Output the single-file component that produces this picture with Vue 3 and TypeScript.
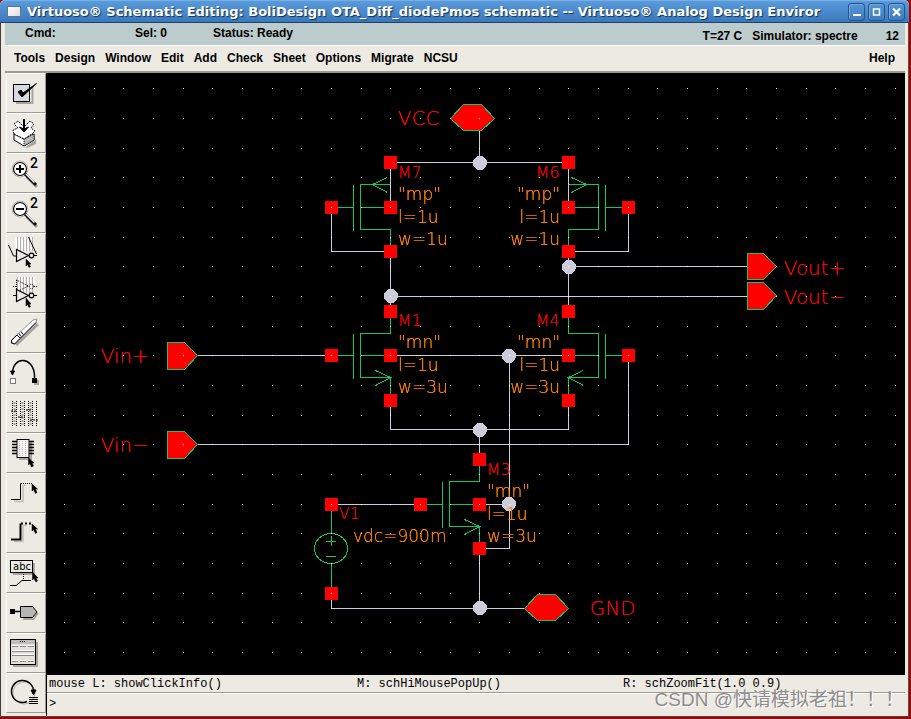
<script setup lang="ts">
type Point = [number, number]

interface Label {
  text: string
  x: number
  y: number
  kind: 'pin' | 'name' | 'param'
  end?: boolean
}

interface Device {
  name: string
  model: string
  width: string
  x: number
  y: number
  dir: 1 | -1
  pmos: boolean
  top: number
  drain: number
  source: number
  gate: number
  labelY: number
}

const menus: string[] = ['Tools', 'Design', 'Window', 'Edit', 'Add', 'Check', 'Sheet', 'Options', 'Migrate', 'NCSU']

const tools: string[] = [
  'Check and save', 'Save', 'Zoom in', 'Zoom out', 'Stretch', 'Copy', 'Delete', 'Undo',
  'Property', 'Component', 'Wire narrow', 'Wire wide', 'Wire name', 'Pin', 'Command options', 'Repeat',
]

const pitch = 89 / 3
const gridDots: Point[] = []
for (let row = -1; row < 19; row++) {
  for (let col = -9; col < 20; col++) {
    gridDots.push([Math.round(331 + col * pitch), Math.round(118 + row * pitch)])
  }
}

// x, y is the bulk terminal; dir points from the gate towards the channel terminals
const devices: Device[] = [
  { name: 'M7', model: '"mp"', width: 'w=1u', x: 390, y: 207, dir: 1, pmos: true, top: 23, drain: 45, source: 44, gate: 331, labelY: 178 },
  { name: 'M6', model: '"mp"', width: 'w=1u', x: 568, y: 207, dir: -1, pmos: true, top: 23, drain: 45, source: 44, gate: 628, labelY: 178 },
  { name: 'M1', model: '"mn"', width: 'w=3u', x: 390, y: 355, dir: 1, pmos: false, top: 22, drain: 44, source: 45, gate: 331, labelY: 326 },
  { name: 'M4', model: '"mn"', width: 'w=3u', x: 568, y: 355, dir: -1, pmos: false, top: 22, drain: 44, source: 45, gate: 628, labelY: 326 },
  { name: 'M3', model: '"mn"', width: 'w=3u', x: 479, y: 504, dir: 1, pmos: false, top: 23, drain: 45, source: 44, gate: 420, labelY: 475 },
]

function devicePath(d: Device): string {
  const X = (n: number): number => d.x + 0.5 - n * d.dir
  const Y = (n: number): number => d.y + 0.5 + n
  const body = `M${X(59)} ${Y(0)}H${X(37)}M${X(37)} ${Y(-d.top)}V${Y(23)}M${X(30)} ${Y(0)}H${X(0)}` +
    `M${X(0)} ${Y(-d.drain)}V${Y(-d.top)}H${X(30)}V${Y(22)}H${X(0)}V${Y(d.source)}`
  const arrow = d.pmos
    ? `M${X(3)} ${Y(-30)}L${X(18)} ${Y(-23)}L${X(3)} ${Y(-15)}`
    : `M${X(15)} ${Y(15)}L${X(0)} ${Y(22)}L${X(15)} ${Y(30)}`
  return body + arrow
}

const terminals: Point[] = devices
  .flatMap((d): Point[] => [[d.x, d.y - d.drain], [d.x, d.y], [d.x, d.y + d.source], [d.gate, d.y]])
  .concat([[331, 504], [331, 593]])

const labels: Label[] = [
  { text: 'VCC', x: 398, y: 125, kind: 'pin' },
  { text: 'Vin+', x: 101, y: 363, kind: 'pin' },
  { text: 'Vin−', x: 101, y: 452, kind: 'pin' },
  { text: 'Vout+', x: 784, y: 275, kind: 'pin' },
  { text: 'Vout−', x: 784, y: 304, kind: 'pin' },
  { text: 'GND', x: 590, y: 615, kind: 'pin' },
  { text: 'V1', x: 339, y: 519, kind: 'name' },
  { text: 'vdc=900m', x: 353, y: 542, kind: 'param' },
  ...devices.flatMap((d): Label[] => {
    const x = d.dir === 1 ? d.x + 8 : d.x - 8
    const end = d.dir === -1
    return [
      { text: d.name, x, y: d.labelY, kind: 'name', end },
      { text: d.model, x, y: d.labelY + 22, kind: 'param', end },
      { text: 'l=1u', x, y: d.labelY + 45, kind: 'param', end },
      { text: d.width, x, y: d.labelY + 67, kind: 'param', end },
    ]
  }),
]

const wires: string[] = [
  'M390.5 207V162.5H568.5V207', 'M479.5 131V162', 'M331.5 207V251.5H390.5V311', 'M628.5 207V251.5H568.5V311',
  'M568.5 266.5H747', 'M390.5 296.5H747', 'M197 355.5H331', 'M197 444.5H628.5V355', 'M390.5 355.5H568.5',
  'M509.5 355V548.5H479.5', 'M390.5 400V429.5H568.5V400', 'M479.5 429V459', 'M331.5 504.5H420', 'M479.5 504.5H509',
  'M479.5 548V608', 'M331.5 593V608.5H524',
]

const junctions: Point[] = [[480, 163], [569, 267], [391, 296], [509, 356], [480, 430], [509, 504], [480, 608]]

const pins: string[] = [
  '450.5,118.5 463.5,104.5 481.5,104.5 494.5,118.5 481.5,130.5 463.5,130.5',
  '524.5,608.5 537.5,594.5 555.5,594.5 568.5,608.5 555.5,620.5 537.5,620.5',
  '167.5,342.5 184.5,342.5 197.5,355.5 184.5,369.5 167.5,369.5',
  '167.5,431.5 184.5,431.5 197.5,444.5 184.5,458.5 167.5,458.5',
  '747.5,253.5 763.5,253.5 776.5,266.5 763.5,279.5 747.5,279.5',
  '747.5,282.5 763.5,282.5 776.5,295.5 763.5,309.5 747.5,309.5',
]

const sliderColumns: number[] = [6, 10, 14, 18, 22, 26, 30]
const chipPins: number[] = [8, 11, 14, 17, 20]
const stripes: number[] = [11, 14, 17, 20, 23, 26]
</script>

<template>
  <div class="desktop">
    <div class="window">
      <header class="title">
        <span class="window-icon"></span>
        <h1>Virtuoso® Schematic Editing: BoliDesign OTA_Diff_diodePmos schematic -- Virtuoso® Analog Design Enviror</h1>
        <div class="controls">
          <button type="button" aria-label="Minimize"><svg viewBox="0 0 15 16"><path d="M4 11h8" stroke="#fff" stroke-width="2" /></svg></button>
          <button type="button" aria-label="Maximize"><svg viewBox="0 0 15 16"><path d="M4.500 5h6v6h-6z" fill="none" stroke="#fff" stroke-width="1.500" /></svg></button>
          <button type="button" aria-label="Close"><svg viewBox="0 0 15 16"><path d="M4 4.500l7 7M11 4.500l-7 7" stroke="#fff" stroke-width="2.200" /></svg></button>
        </div>
      </header>

      <div class="frame">
        <div class="status">
          <div class="left-status">
            <span class="cmd">Cmd:</span><span class="sel">Sel: 0</span><span>Status: Ready</span>
          </div>
          <div class="right-status">
            <span>T=27 C</span><span>Simulator: spectre</span><span class="count">12</span>
          </div>
        </div>

        <nav class="menu">
          <button v-for="m in menus" :key="m" type="button">{{ m }}</button>
          <button type="button" class="help">Help</button>
        </nav>

        <div class="work">
          <div class="tools">
            <button v-for="(t, i) in tools" :key="t" type="button" :aria-label="t">
              <svg viewBox="0 0 40 40" class="icon">
                <template v-if="i === 0">
                  <path d="M10 30h16.500v-17" class="shade" />
                  <rect x="7.500" y="11.500" width="16" height="17" fill="#d8d8e0" stroke="#000" />
                  <path d="M12 19l4 5L30.500 10.500 17 20l-2-3z" fill="#000" stroke="#000" />
                </template>
                <template v-else-if="i === 1">
                  <path d="M20 34l10-8v5l-9 4z" fill="#aaa59c" />
                  <path d="M8 21l10 5 10-5v6l-10 6-10-6z" fill="#fff" stroke="#000" />
                  <path d="M18 26v7l10-6v-6z" fill="#b8b8b8" stroke="#000" stroke-dasharray="1 1" />
                  <path d="M8 21l-1-4 5-2-4-4 4-3 6 6 6-6 4 3-3 4 4 3-3 3-8 5z" fill="#fff" stroke="#000" stroke-dasharray="2 1" />
                  <path d="M18 6v11" stroke="#000" stroke-width="2" /><path d="M13.500 14l4.500 5 4.500-5-4.500 2z" fill="#000" stroke="#000" />
                </template>
                <template v-else-if="i === 2 || i === 3">
                  <path d="M21 24l10 10" stroke="#aaa59c" stroke-width="3" />
                  <circle cx="14" cy="16" r="8" fill="#fff" stroke="#b9b5ad" />
                  <circle cx="14" cy="16" r="6.500" fill="#fff" stroke="#000" stroke-width="1.200" />
                  <path d="M19 21l11 11" stroke="#000" stroke-width="3" /><path d="M20 21l8.500 8.500" stroke="#fff" stroke-width="1.500" />
                  <path :d="i === 2 ? 'M10 16h8M14 12v8' : 'M10 16h8'" stroke="#000" stroke-width="2" />
                  <text x="24" y="15" class="digit">2</text>
                </template>
                <template v-else-if="i === 4">
                  <path v-for="s in stripes" :key="s" :d="`M${s - 1}.5 4v14`" stroke="#fff" stroke-width="2" />
                  <path v-for="s in stripes" :key="'g' + s" :d="`M${s}.5 4v14`" stroke="#b5b1a9" />
                  <path d="M2.500 12l5 11h3M22.500 4l8 17" stroke="#000" fill="none" />
                  <path d="M10.500 16.500v12l12-6zM28 22.500h3" fill="#eceae3" stroke="#000" stroke-width="1.200" /><circle cx="25.500" cy="22.500" r="2.300" fill="#eceae3" stroke="#000" stroke-width="1.200" />
                  <path d="M20 26v7l1.500-1.500 1.500 3 1.500-1-1.500-2.500h2z" fill="#000" stroke="#000" stroke-width=".5" />
                </template>
                <template v-else-if="i === 5">
                  <path v-for="s in stripes" :key="s" :d="`M${s + 1}.5 4v14`" stroke="#fff" stroke-width="2" />
                  <path v-for="s in stripes" :key="'g' + s" :d="`M${s}.5 4v16`" stroke="#b5b1a9" />
                  <path d="M10.500 7v12l12-6zM7 13.500h3M28 13.500h3" fill="none" stroke="#000" stroke-dasharray="1 1" />
                  <circle cx="25.500" cy="13.500" r="2.300" fill="none" stroke="#000" stroke-dasharray="1 1" />
                  <path d="M10.500 16.500v12l12-6zM7 22.500h3M28 22.500h3" fill="#eceae3" stroke="#000" stroke-width="1.200" /><circle cx="25.500" cy="22.500" r="2.300" fill="#eceae3" stroke="#000" stroke-width="1.200" />
                  <path d="M20 25v8l1.500-1.500 1.500 3 1.500-1-1.500-2.500h2z" fill="#000" stroke="#000" stroke-width=".5" />
                </template>
                <template v-else-if="i === 6">
                  <path d="M10 32L32 11" stroke="#aaa59c" stroke-width="3" />
                  <path d="M5.500 27L27 7l4-1-1 4L9 31l-3-1z" fill="#fff" stroke="#999" />
                  <path d="M5.500 27v3l3 1L30 9.500" fill="none" stroke="#000" /><path d="M6 27l5-5M13 20.500l2 3M15 18.500l2 3M11 22l3 3" stroke="#000" />
                </template>
                <template v-else-if="i === 7">
                  <path d="M6.500 20C7 3 27 3 28.500 22v3" fill="none" stroke="#000" stroke-width="1.500" />
                  <path d="M4.500 18h4L6.500 22z" fill="#000" stroke="#000" />
                  <rect x="4.500" y="25.500" width="5" height="5" fill="#fff" stroke="#000" stroke-dasharray="1 1" />
                  <path d="M28 27h5v5h-5z" fill="#aaa59c" /><rect x="26" y="25" width="5" height="5" />
                </template>
                <template v-else-if="i === 8">
                  <path v-for="c in [8, 16, 24]" :key="'a' + c" :d="`M${c}.5 9v24`" stroke="#aaa59c" stroke-width="2" stroke-dasharray="2 1" />
                  <path v-for="c in sliderColumns" :key="c" :d="`M${c}.5 8v25`" stroke="#000" stroke-dasharray="1 1" />
                  <path d="M5 18h6M12 24h7M20 17h5M24 27h8" stroke="#000" stroke-dasharray="2 1" />
                </template>
                <template v-else-if="i === 9">
                  <path d="M13 26h12V8" fill="none" stroke="#aaa59c" stroke-width="2" />
                  <path v-for="p in chipPins" :key="p" :d="`M6 ${p}.5h5M23 ${p}.5h5`" stroke="#000" stroke-width="1.500" />
                  <rect x="11" y="6.500" width="12" height="18" fill="#f6f5f1" stroke="#000" />
                  <path d="M13.500 8v15M16.500 8v15M19.500 8v15" stroke="#bbb" stroke-dasharray="1 1" />
                  <path d="M22.500 25v7l1.500-1.500 1.500 3.500 2-1-1.500-3h2z" fill="#000" stroke="#000" stroke-width=".5" />
                </template>
                <template v-else-if="i === 10 || i === 11">
                  <path d="M8 28.500h9v-16h3" fill="none" stroke="#c4c0b8" stroke-width="1.500" />
                  <path d="M5 26.500h9.500v-16" fill="none" stroke="#000" :stroke-width="i === 11 ? 2 : 1" />
                  <path d="M15 10.500h11" stroke="#000" :stroke-width="i === 11 ? 2 : 1" :stroke-dasharray="i === 11 ? '2 2' : '1 1'" />
                  <path d="M26 11v7l1.500-1.500 2 4 1.500-1-1.500-3.500h2z" fill="#000" stroke="#000" stroke-width=".5" />
                </template>
                <template v-else-if="i === 12">
                  <path d="M7 21h21V10" fill="none" stroke="#aaa59c" stroke-width="2" />
                  <rect x="4.500" y="7.500" width="22" height="12" fill="#eceae3" stroke="#000" />
                  <text x="7" y="17" class="abc">abc</text>
                  <path d="M17.500 21v6" stroke="#000" stroke-dasharray="1 1" /><path d="M4 32.500h6l6-5h9" fill="none" stroke="#000" />
                  <path d="M26.500 19v8l1.500-1.500 2 3.500 1.500-1-1.500-3h2z" fill="#000" stroke="#000" stroke-width=".5" />
                </template>
                <template v-else-if="i === 13">
                  <path d="M17 26h10.500l4.500-6" fill="none" stroke="#aaa59c" stroke-width="2" />
                  <rect x="4" y="16" width="5" height="5" /><path d="M9 18.500h5" stroke="#000" stroke-width="1.500" />
                  <path d="M14.500 13.500h12l4.500 5.500-4.500 5.500h-12z" fill="#b8b6b0" stroke="#000" />
                </template>
                <template v-else-if="i === 14">
                  <path d="M7 33h24V9" fill="none" stroke="#aaa59c" stroke-width="2" />
                  <rect x="4.500" y="6.500" width="25" height="25" fill="#e4e2db" stroke="#000" />
                  <path d="M5 8h24M5 10h24" stroke="#999" /><path d="M14 8.500h6" stroke="#000" stroke-dasharray="1 1" />
                  <path d="M6 12.500h6M14 12.500h6M22 12.500h6M6 17.500h22M6 21.500h22M6 27.500h6M14 27.500h6M22 27.500h6" stroke="#fff" />
                  <path d="M6 13.500h6M14 13.500h6M22 13.500h6M6 18.500h22M6 22.500h22M6 28.500h6M14 28.500h6M22 28.500h6" stroke="#888" />
                </template>
                <template v-else>
                  <circle cx="18" cy="20" r="11" fill="none" stroke="#b9b5ad" />
                  <path d="M21 28.500A11 11 0 1 1 27.500 19" fill="none" stroke="#000" stroke-width="1.500" />
                  <path d="M25 17h5l-2.500 5z" fill="#000" stroke="#000" />
                  <path d="M23 24.500h9M23 26.500h9M23 28.500h9M23 30.500h9" stroke="#000" />
                </template>
              </svg>
            </button>
          </div>

          <main class="editor">
            <svg class="canvas" viewBox="47 73 858 602" role="img" aria-label="OTA schematic">
              <g shape-rendering="crispEdges">
                <path v-for="w in wires" :key="w" :d="w" class="wire" />
                <path v-for="d in devices" :key="d.name" :d="devicePath(d)" class="device" />
                <path d="M390.500 162V207M568.500 162V207" class="wire" />
                <path d="M331.500 504V533.500M331.500 563.500V593M326 541.500H336M331.500 536V546M326 556.500H336" class="device" />
                <ellipse cx="331" cy="548.500" rx="16.500" ry="15" class="device" />
                <polygon v-for="p in pins" :key="p" :points="p" class="pin-shape" />
                <circle v-for="([x, y], i) in junctions" :key="i" :cx="x" :cy="y" r="7" class="junction" />
                <rect v-for="([x, y], i) in terminals" :key="i" :x="x - 6" :y="y - 6" width="13" height="13" class="terminal" />
              </g>
              <text v-for="(l, i) in labels" :key="i" :x="l.x" :y="l.y" :class="['label', l.kind, { end: l.end }]">{{ l.text }}</text>
              <rect v-for="([x, y], i) in gridDots" :key="i" :x="x" :y="y" width="1" height="1" fill="#fff" shape-rendering="crispEdges" />
            </svg>
            <div class="mouse">
              <span>mouse L: showClickInfo()</span><span>M: schHiMousePopUp()</span><span>R: schZoomFit(1.0 0.9)</span>
            </div>
            <div class="prompt">
              <label for="command">&gt;</label><input id="command" type="text">
            </div>
          </main>
        </div>
      </div>
    </div>
    <div class="watermark">CSDN @快请模拟老祖！！！</div>
  </div>
</template>

<style>
body {
  margin: 0;
}
</style>

<style scoped>
.desktop {
  position: relative;
  box-sizing: border-box;
  min-height: 100vh;
  display: flex;
  padding: 0 2px 2px 0;
  background: #a00508;
  font-family: "Liberation Sans", sans-serif;
  color: #000;
}
button {
  margin: 0;
  padding: 0;
  border: 0;
  background: none;
  color: inherit;
  font: inherit;
}
.window {
  flex: 1;
  min-width: 0;
  display: flex;
  flex-direction: column;
  background: #edeae3;
  border-radius: 5px 5px 0 0;
}
.title {
  display: flex;
  align-items: center;
  height: 23px;
  box-sizing: border-box;
  padding: 0 4px 0 7px;
  border-top: 1px solid #78aee6;
  border-bottom: 1px solid #1c4468;
  border-radius: 5px 5px 0 0;
  background: linear-gradient(#5a9bdc, #3a78bb);
}
.window-icon {
  flex: none;
  width: 12px;
  height: 9px;
  border: 1px solid #64758a;
  background: linear-gradient(135deg, #fff, #dcdcdc);
}
h1 {
  flex: 1;
  min-width: 0;
  margin: 0 3px 0 6px;
  overflow: hidden;
  white-space: nowrap;
  color: #fff;
  font: bold 13px/20px "DejaVu Sans", sans-serif;
  text-shadow: 1px 1px 1px #14324f;
}
.controls {
  display: flex;
  gap: 3px;
}
.controls button {
  width: 17px;
  height: 18px;
  box-sizing: border-box;
  border: 1px solid #245585;
  border-radius: 3px;
  box-shadow: inset 1px 1px 0 #6fa7df;
}
.controls svg {
  display: block;
  width: 15px;
  height: 16px;
}
.frame {
  flex: 1;
  display: flex;
  flex-direction: column;
  padding: 0 3px 0 4px;
  border-left: 1px solid #443c3c;
  border-right: 1px solid #55504c;
  border-bottom: 1px solid #4a4440;
}
.status {
  display: flex;
  justify-content: space-between;
  height: 22px;
  background: #bccbcb;
  border-bottom: 1px solid #fff;
  font: bold 12px/20px "Liberation Sans", sans-serif;
  white-space: pre;
}
.left-status,
.right-status {
  display: flex;
}
.left-status {
  padding-left: 20px;
}
.cmd {
  width: 110px;
}
.sel {
  width: 78px;
}
.right-status {
  gap: 10px;
  padding-right: 6px;
  line-height: 27px;
}
.count {
  padding-left: 18px;
}
.menu {
  display: flex;
  align-items: center;
  gap: 10px;
  height: 25px;
  padding: 0 10px 0 9px;
  border-bottom: 2px solid #9d9a94;
  font: bold 12px/25px "Liberation Sans", sans-serif;
}
.help {
  margin-left: auto;
}
.work {
  flex: 1;
  display: flex;
}
.tools {
  display: flex;
  flex-direction: column;
  width: 40px;
  padding-left: 1px;
}
.tools button {
  height: 40px;
  width: 40px;
  box-sizing: border-box;
  border: 1px solid;
  border-color: #fff #9d9a94 #9d9a94 #fff;
}
.icon {
  display: block;
  width: 40px;
  height: 40px;
  margin: -1px;
  overflow: visible;
}
.shade {
  fill: none;
  stroke: #aaa59c;
  stroke-width: 2;
}
.digit {
  font: 500 14px Roboto, sans-serif;
}
.abc {
  font: 10px "DejaVu Sans", sans-serif;
}
.editor {
  flex: 1;
  min-width: 0;
  display: flex;
  flex-direction: column;
  border-left: 1px solid #000;
}
.canvas {
  display: block;
  flex: 1;
  width: 100%;
  min-height: 0;
  background: #000;
}
.wire {
  fill: none;
  stroke: #cdccda;
}
.device {
  fill: none;
  stroke: #0fc764;
}
.pin-shape {
  fill: #f00;
  stroke: #0fc764;
}
.junction {
  fill: #cdccda;
}
.terminal {
  fill: #f00;
}
.label {
  font: 200 16px "DejaVu Sans Light", "DejaVu Sans", sans-serif;
}
.label.pin {
  font-size: 20px;
}
.label.param {
  font-size: 17px;
}
.pin,
.name {
  fill: #f00;
  filter: drop-shadow(0 0 0 #f00);
}
.param {
  fill: #ff8000;
  filter: drop-shadow(0 0 0 #ff8000);
}
.end {
  text-anchor: end;
}
.mouse {
  display: grid;
  grid-template-columns: 308px 266px 1fr;
  height: 17px;
  padding-left: 2px;
  border-bottom: 1px solid #9d9a94;
  font: 12px/18px "Liberation Mono", monospace;
  white-space: nowrap;
}
.prompt {
  display: flex;
  height: 22px;
  padding-left: 2px;
  border-top: 1px solid #fff;
  font: 12px/20px "Liberation Mono", monospace;
}
.prompt input {
  flex: 1;
  min-width: 0;
  padding: 0 4px;
  border: 0;
  outline: 0;
  background: transparent;
  font: inherit;
}
.watermark {
  position: absolute;
  right: 7px;
  bottom: 5px;
  color: #8d8c8a;
  font: 19px/28px "Liberation Sans", "Noto Sans CJK SC", sans-serif;
  text-shadow: 1px 1px 0 #fff;
  pointer-events: none;
}
</style>
